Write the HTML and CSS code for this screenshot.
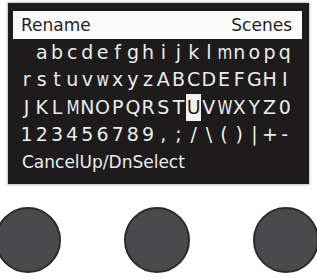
FILE: index.html
```html
<!DOCTYPE html>
<html>
<head>
<meta charset="utf-8">
<link rel="stylesheet" href="styles.css">
</head>
<body>
<div class="screen">
  <div class="header"><span>Rename</span><span>Scenes</span></div>
  <div class="row"><span></span><span>a</span><span>b</span><span>c</span><span>d</span><span>e</span><span>f</span><span>g</span><span>h</span><span>i</span><span>j</span><span>k</span><span>l</span><span class="wide">m</span><span>n</span><span>o</span><span>p</span><span>q</span></div>
  <div class="row"><span>r</span><span>s</span><span>t</span><span>u</span><span>v</span><span class="wide">w</span><span>x</span><span>y</span><span>z</span><span>A</span><span>B</span><span>C</span><span>D</span><span>E</span><span>F</span><span>G</span><span>H</span><span>I</span></div>
  <div class="row"><span>J</span><span>K</span><span>L</span><span class="wide">M</span><span>N</span><span>O</span><span>P</span><span>Q</span><span>R</span><span>S</span><span>T</span><span class="sel">U</span><span>V</span><span class="wide">W</span><span>X</span><span>Y</span><span>Z</span><span>0</span></div>
  <div class="row"><span>1</span><span>2</span><span>3</span><span>4</span><span>5</span><span>6</span><span>7</span><span>8</span><span>9</span><span>,</span><span>;</span><span>/</span><span>\</span><span>(</span><span>)</span><span>|</span><span>+</span><span>-</span></div>
  <div class="footer">CancelUp/DnSelect</div>
</div>
<div class="knobs">
  <div class="knob"></div>
  <div class="knob"></div>
  <div class="knob"></div>
</div>
</body>
</html>
```

FILE: styles.css
```css
html, body {
  margin: 0;
  padding: 0;
  background: #ffffff;
  overflow: hidden;
  width: 317px;
  height: 278px;
}

body {
  font-family: "DejaVu Sans", sans-serif;
}

.screen {
  margin: 3px 0 0 8px;
  width: 301px;
  height: 181px;
  background: #1d1b1b;
  box-shadow: 0 0 2px 1px rgba(0, 0, 0, 0.25);
  box-sizing: border-box;
  padding: 8px 7px 0 5px;
}

.header {
  display: flex;
  justify-content: space-between;
  align-items: center;
  height: 28px;
  background: #fbfbfb;
  color: #1f1f1f;
  font-size: 17px;
  padding: 0 10px 0 8px;
  box-sizing: border-box;
}

.row {
  display: grid;
  grid-template-columns: repeat(18, 15.2px);
  font-size: 19px;
  line-height: 27.4px;
  color: #ececec;
  padding-left: 6px;
}

.row span {
  text-align: center;
  white-space: nowrap;
}

.row .wide {
  transform: scaleX(0.8);
}

.row .sel {
  background: #f2f2f2;
  color: #1d1b1b;
}

.footer {
  font-size: 17px;
  line-height: 27.4px;
  color: #ececec;
  padding-left: 9px;
}

.knobs {
  display: flex;
  gap: 63px;
  margin: 23px 0 0 -5px;
}

.knob {
  flex: none;
  width: 66px;
  height: 66px;
  border-radius: 50%;
  background: #4a4a4c;
  border: 2px solid #2b2b2c;
  box-sizing: border-box;
}
```
